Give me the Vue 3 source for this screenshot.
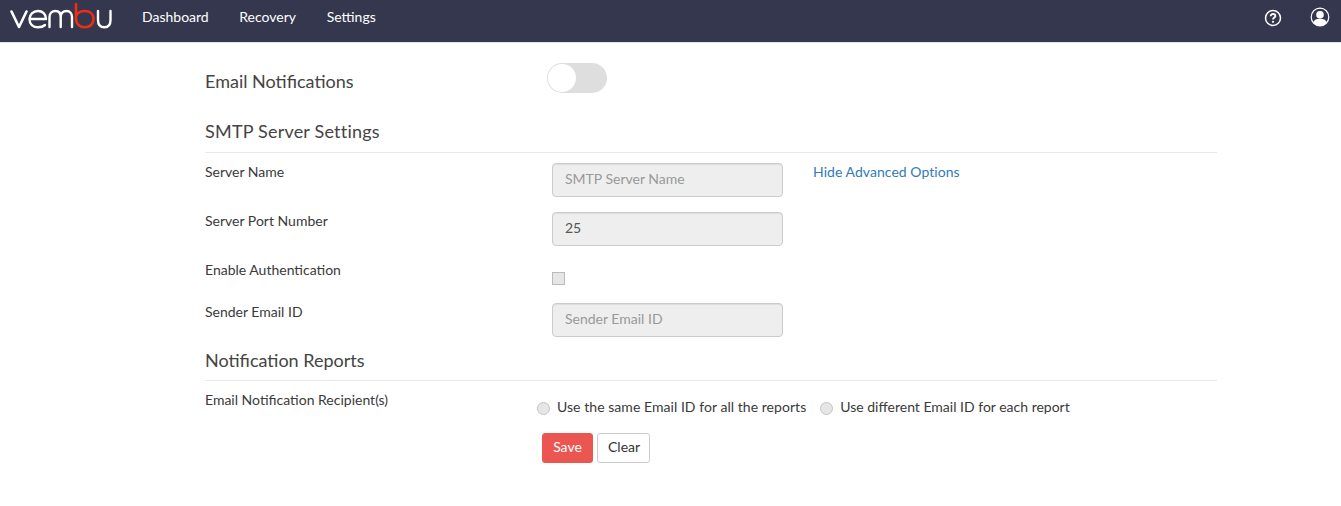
<script setup>
const nav = ['Dashboard', 'Recovery', 'Settings']
</script>

<template>
  <div class="page">
    <header class="topbar">
      <svg class="logo" width="102" height="28" viewBox="0 0 102 28" fill="none" stroke-linecap="round" stroke-linejoin="round">
        <path d="M1.500 10.500 L9 26 L16.500 10.500" stroke="#fff" stroke-width="2.600" />
        <path d="M19.500 18 H36 C36 13 32.500 10 28 10 C23 10 19.500 13.500 19.500 18 C19.500 23 23 26.300 28 26.300 C31 26.300 33.500 25.400 35 24" stroke="#fff" stroke-width="2.400" />
        <path d="M39.500 26 V16 C39.500 12.500 42 10 45.500 10 C49 10 50.700 12.500 50.700 16 V26 M50.700 16 C50.700 12.500 53 10 56.500 10 C60 10 62 12.500 62 16 V26" stroke="#fff" stroke-width="2.400" />
        <path d="M66 3 V18 C66 23 69.800 26.300 74.800 26.300 C79.800 26.300 83.500 23 83.500 18 C83.500 13 79.800 10 74.800 10 C71.500 10 68 11.500 66.500 14" stroke="#ee2e14" stroke-width="2.600" />
        <path d="M88 10 V19 C88 23.500 90 26.300 94.300 26.300 C98.500 26.300 100.500 23.500 100.500 19 V10" stroke="#fff" stroke-width="2.400" />
      </svg>
      <nav class="nav">
        <a v-for="item in nav" :key="item" class="nav-link">{{ item }}</a>
      </nav>
      <div class="top-icons">
        <svg class="help" width="18" height="18" viewBox="0 0 18 18" fill="none">
          <circle cx="9" cy="9" r="7.500" stroke="#fff" stroke-width="1.500" />
          <path d="M6.600 7.200 C6.600 5.800 7.700 5 9 5 C10.400 5 11.400 5.800 11.400 7 C11.400 8.500 9 8.700 9 10.500" stroke="#fff" stroke-width="1.800" />
          <circle cx="9" cy="12.800" r="1.100" fill="#fff" />
        </svg>
        <svg width="20" height="20" viewBox="0 0 20 20" fill="none">
          <circle cx="10" cy="10" r="8.800" stroke="#fff" stroke-width="1.200" />
          <circle cx="10" cy="7.800" r="3.800" fill="#fff" />
          <path d="M3.500 15.500 C4 12.800 6.500 11.800 10 11.800 C13.500 11.800 16 12.800 16.500 15.500 C15 17.500 12.500 18.800 10 18.800 C7.500 18.800 5 17.500 3.500 15.500 Z" fill="#fff" />
        </svg>
      </div>
    </header>

    <main class="content">
      <div class="toggle-row">
        <h2 class="toggle-title">Email Notifications</h2>
        <span class="toggle"><span class="knob"></span></span>
      </div>

      <h3 class="section first">SMTP Server Settings</h3>

      <div class="row row-server">
        <label class="label">Server Name</label>
        <input class="input" disabled placeholder="SMTP Server Name" />
        <a class="adv">Hide Advanced Options</a>
      </div>
      <div class="row row-port">
        <label class="label">Server Port Number</label>
        <input class="input" disabled value="25" />
      </div>
      <div class="row row-auth">
        <label class="label">Enable Authentication</label>
        <span class="check"></span>
      </div>
      <div class="row">
        <label class="label">Sender Email ID</label>
        <input class="input" disabled placeholder="Sender Email ID" />
      </div>

      <h3 class="section second">Notification Reports</h3>

      <div class="row recip">
        <label class="label recip-label">Email Notification Recipient(s)</label>
        <div class="radios">
          <span class="radio"></span>
          <span class="radio-text">Use the same Email ID for all the reports</span>
          <span class="radio"></span>
          <span class="radio-text last">Use different Email ID for each report</span>
        </div>
      </div>

      <div class="actions">
        <button class="btn save">Save</button>
        <button class="btn clear">Clear</button>
      </div>
    </main>
  </div>
</template>

<style>
html, body { margin: 0; background: #fff; }
</style>

<style scoped>
.page {
  font-family: Lato, "Noto Sans", sans-serif;
  font-size: 14px;
  color: #3a3a3a;
  height: 506px;
  overflow: hidden;
}
.topbar {
  height: 42px;
  background: #35374e;
  border-bottom: 1px solid #e4e5e8;
  display: flex;
  align-items: flex-start;
}
.logo { margin-left: 10px; flex: none; margin-top: 1px; }
.nav { display: flex; gap: 30.6px; margin-left: 30px; margin-top: 8px; line-height: 18px; }
.nav-link { color: #fff; font-size: 14px; }
.top-icons {
  margin-left: auto;
  margin-right: 11px;
  display: flex;
  align-items: center;
  gap: 28px;
  margin-top: 7px;
}
.help { margin-top: 1px; }
.content { width: 1012px; margin-left: 205px; }
.toggle-row { display: flex; align-items: center; height: 30px; padding-top: 20px; }
.toggle-title { margin: 0; width: 342px; font-size: 18px; font-weight: 400; line-height: 20px; padding-top: 6px; color: #444; }
.toggle {
  width: 60px;
  height: 30px;
  box-sizing: border-box;
  border-radius: 15px;
  background: #dedede;
  padding: 1px;
  display: block;
}
.knob { display: block; width: 28px; height: 28px; border-radius: 50%; background: #fff; }
.section {
  margin: 0;
  font-size: 18px;
  font-weight: 400;
  line-height: 20px;
  color: #444;
  border-bottom: 1px solid #e8e8e8;
}
.section.first { margin-top: 28px; padding-bottom: 11px; margin-bottom: 10px; letter-spacing: 0.2px; }
.section.second { margin-top: 13px; padding-bottom: 10px; margin-bottom: 10px; }
.row { display: flex; align-items: flex-start; }
.row-server, .row-port { height: 49px; }
.row-auth { height: 42px; }
.label { width: 347px; flex: none; font-size: 14px; line-height: 18px; }
.input {
  width: 231px;
  height: 34px;
  box-sizing: border-box;
  border: 1px solid #ccc;
  border-radius: 4px;
  background: #eee;
  padding: 0 12px 4px;
  box-shadow: inset 0 1px 1px rgba(0, 0, 0, 0.075);
  font: 14px Lato, "Noto Sans", sans-serif;
  color: #555;
  outline: none;
  margin: 0;
}
.input::placeholder { color: #999; opacity: 1; }
.adv { margin-left: 30px; color: #337ab7; line-height: 18px; letter-spacing: 0.05px; }
.check {
  width: 13px;
  height: 13px;
  box-sizing: border-box;
  margin-top: 11px;
  border: 1px solid #bbb;
  background: #e6e6e6;
}
.recip { height: 42px; }
.recip-label { width: 332px; }
.radios { display: flex; align-items: center; margin-top: 7px; line-height: 18px; }
.radio {
  width: 13px;
  height: 13px;
  box-sizing: border-box;
  border-radius: 50%;
  border: 1px solid #c4c4c4;
  background: #e6e6e6;
  flex: none;
  position: relative;
  top: 1px;
}
.radio-text { margin-left: 7px; margin-right: 14px; white-space: nowrap; letter-spacing: 0.05px; }
.radio-text.last { letter-spacing: 0; }
.actions { display: flex; gap: 4px; margin-left: 337px; }
.btn {
  height: 30px;
  box-sizing: border-box;
  border-radius: 3px;
  font: 14px Lato, "Noto Sans", sans-serif;
  padding: 0 10px 4px;
}
.save { background: #eb5650; border: 1px solid #eb5650; color: #fff; width: 51px; }
.clear { background: #fff; border: 1px solid #ccc; color: #333; width: 53px; }
</style>
